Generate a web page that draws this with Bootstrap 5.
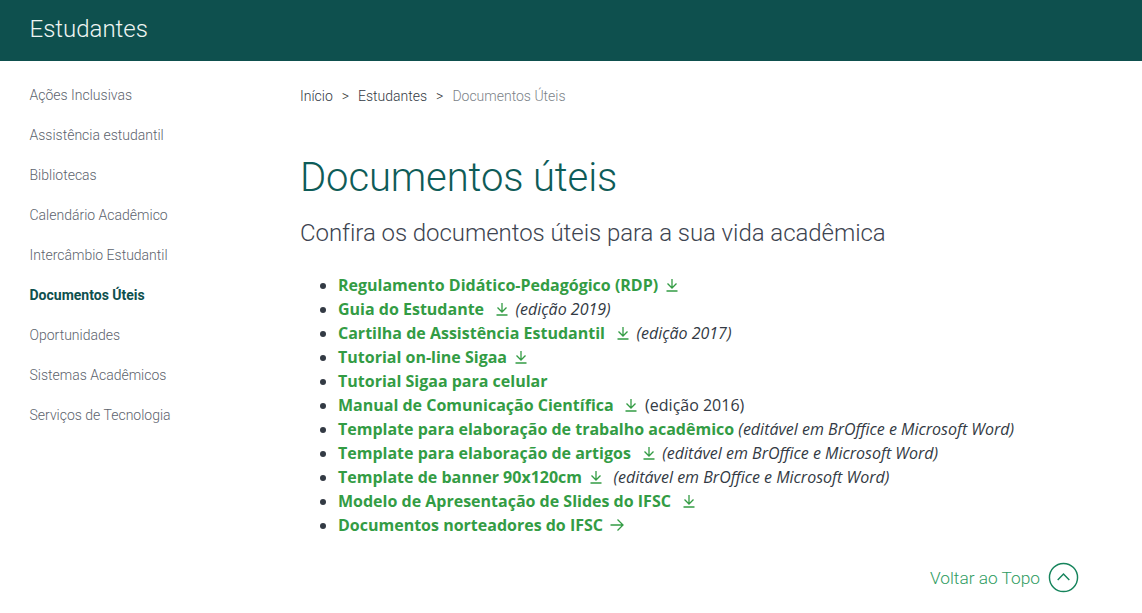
<!DOCTYPE html>
<html lang="pt-BR">
<head>
    <meta charset="UTF-8">
    <meta name="viewport" content="width=device-width, initial-scale=1.0">
    <title>Documentos úteis</title>
    <link href="https://cdn.jsdelivr.net/npm/bootstrap@5.3.0/dist/css/bootstrap.min.css" rel="stylesheet">
    <style>
        body {
            font-family: "Roboto", sans-serif;
            font-weight: 300;
            background: #fff;
            overflow: hidden;
        }

        /* Top bar */
        .site-bar {
            height: 61px;
            background: #0e504e;
            padding: 0 0 4px 29.5px;
        }
        .site-bar a {
            color: #eef5f3;
            font-size: 24px;
            font-weight: 300;
            text-decoration: none;
        }

        /* Side menu */
        .side-col {
            width: 300px;
            padding: 14px 0 0 29.5px;
        }
        .side-menu a {
            display: block;
            height: 40px;
            line-height: 40px;
            font-size: 14px;
            color: #5c636d;
            text-decoration: none;
        }
        .side-menu a.current {
            color: #0e504e;
            font-weight: 700;
        }

        /* Breadcrumb */
        .crumbs {
            font-size: 14px;
            line-height: 20px;
            margin: 25px 0 0;
            --bs-breadcrumb-divider: '>';
            --bs-breadcrumb-item-padding-x: 9px;
            --bs-breadcrumb-divider-color: #333;
            --bs-breadcrumb-item-active-color: #7b8288;
        }
        .crumbs a {
            color: #333a44;
            text-decoration: none;
        }

        .page-title {
            font-size: 40px;
            line-height: 48px;
            font-weight: 300;
            letter-spacing: -0.12px;
            color: #0e5c58;
            margin: 48px 0 0;
        }
        .page-sub {
            font-size: 24px;
            line-height: 32px;
            font-weight: 300;
            letter-spacing: -0.05px;
            color: #3d4450;
            margin: 15px 0 0;
        }

        /* Documents list */
        .doc-list {
            font-family: "Open Sans", sans-serif;
            font-weight: 400;
            font-size: 16px;
            line-height: 24px;
            color: #333a44;
            margin: 24px 0 0;
            padding-left: 38px;
        }
        .doc-list a {
            color: #339c44;
            font-weight: 700;
            text-decoration: none;
        }
        .doc-list svg {
            width: 14px;
            height: 14px;
            margin: 0 2.5px;
            vertical-align: -1px;
            stroke: #339c44;
            fill: none;
            stroke-width: 1.3;
        }

        /* Back to top */
        .back-top {
            margin: 25px 63px 0 0;
            color: #2f9c62;
            font-size: 17.3px;
            font-weight: 300;
            text-decoration: none;
        }
        .back-top svg {
            width: 31px;
            height: 31px;
            margin-bottom: 2px;
            fill: none;
            stroke: #16845c;
            stroke-width: 1.5;
        }
    </style>
</head>
<body>
    <header class="site-bar d-flex align-items-center">
        <a href="#">Estudantes</a>
    </header>

    <div class="d-flex">
        <nav class="side-col flex-shrink-0">
            <div class="side-menu">
                <a href="#">Ações Inclusivas</a>
                <a href="#">Assistência estudantil</a>
                <a href="#">Bibliotecas</a>
                <a href="#">Calendário Acadêmico</a>
                <a href="#">Intercâmbio Estudantil</a>
                <a href="#" class="current">Documentos Úteis</a>
                <a href="#">Oportunidades</a>
                <a href="#">Sistemas Acadêmicos</a>
                <a href="#">Serviços de Tecnologia</a>
            </div>
        </nav>

        <main class="flex-grow-1">
            <ol class="breadcrumb crumbs">
                <li class="breadcrumb-item"><a href="#">Início</a></li>
                <li class="breadcrumb-item"><a href="#">Estudantes</a></li>
                <li class="breadcrumb-item active">Documentos Úteis</li>
            </ol>

            <h1 class="page-title">Documentos úteis</h1>
            <p class="page-sub">Confira os documentos úteis para a sua vida acadêmica</p>

            <svg width="0" height="0" class="position-absolute">
                <symbol id="ico-down" viewBox="0 0 14 14"><path d="M7 1v9M2.5 5.5 7 10l4.5-4.5M1.5 13h11"/></symbol>
                <symbol id="ico-right" viewBox="0 0 14 14"><path d="M0.5 7h12.5M7.5 1.5 13 7l-5.500 5.500"/></symbol>
            </svg>

            <ul class="doc-list">
                <li><a href="#">Regulamento Didático-Pedagógico (RDP) <svg><use href="#ico-down"/></svg></a></li>
                <li><a href="#">Guia do Estudante &nbsp;<svg><use href="#ico-down"/></svg></a> <em>(edição 2019)</em></li>
                <li><a href="#">Cartilha de Assistência Estudantil &nbsp;<svg><use href="#ico-down"/></svg></a> <em>(edição 2017)</em></li>
                <li><a href="#">Tutorial on-line Sigaa <svg><use href="#ico-down"/></svg></a></li>
                <li><a href="#">Tutorial Sigaa para celular</a></li>
                <li><a href="#">Manual de Comunicação Científica &nbsp;<svg><use href="#ico-down"/></svg></a> (edição 2016)</li>
                <li><a href="#">Template para elaboração de trabalho acadêmico</a> <em>(editável em BrOffice e Microsoft Word)</em></li>
                <li><a href="#">Template para elaboração de artigos &nbsp;<svg><use href="#ico-down"/></svg></a> <em>(editável em BrOffice e Microsoft Word)</em></li>
                <li><a href="#">Template de banner 90x120cm <svg><use href="#ico-down"/></svg></a> &nbsp;<em>(editável em BrOffice e Microsoft Word)</em></li>
                <li><a href="#">Modelo de Apresentação de Slides do IFSC &nbsp;<svg><use href="#ico-down"/></svg></a></li>
                <li><a href="#">Documentos norteadores do IFSC <svg><use href="#ico-right"/></svg></a></li>
            </ul>

            <div class="d-flex justify-content-end">
                <a href="#" class="back-top d-flex align-items-center gap-2">Voltar ao Topo
                    <svg viewBox="0 0 32 32"><circle cx="16" cy="16" r="14.5"/><path d="M10 18.500 16 12.500l6 6"/></svg>
                </a>
            </div>
        </main>
    </div>

    <script src="https://cdn.jsdelivr.net/npm/bootstrap@5.3.0/dist/js/bootstrap.bundle.min.js"></script>
</body>
</html>
